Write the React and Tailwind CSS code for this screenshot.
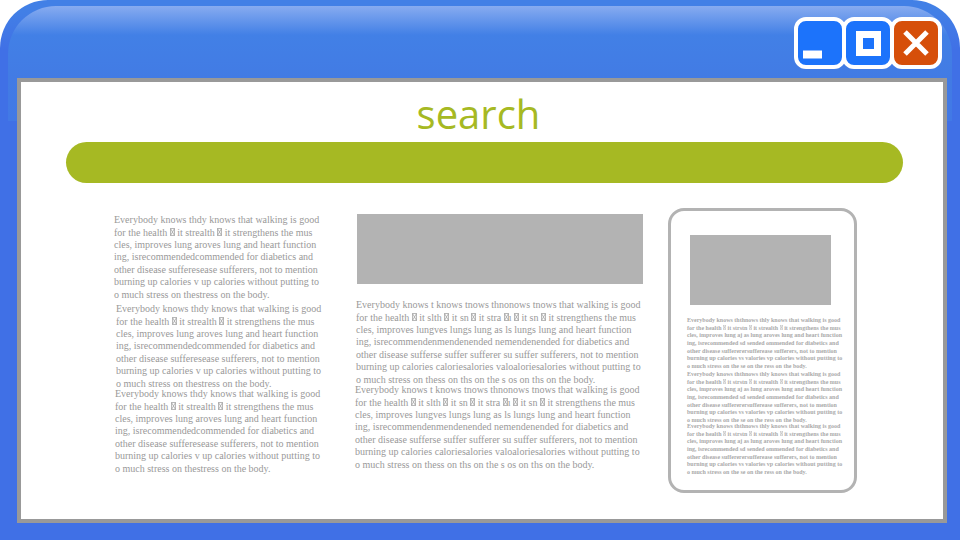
import React from "react";

const NARROW = [
  "Everybody knows thdy knows that walking is good",
  "for the health # it strealth # it strengthens the mus",
  "cles, improves lung aroves lung and heart function",
  "ing, isrecommendedcommended for diabetics and",
  "other disease sufferesease sufferers, not to mention",
  "burning up calories v up calories without putting to",
  "o much stress on thestress on the body.",
];

const WIDE = [
  "Everybody knows t knows tnows thnonows tnows that walking is good",
  "for the health # it slth # it sn # it stra #ı # it sn # it strengthens the mus",
  "cles, improves lungves lungs lung as ls lungs lung and heart function",
  "ing, isrecommendenmendenended nemendenended for diabetics and",
  "other disease sufferse suffer sufferer su suffer sufferers, not to mention",
  "burning up calories caloriesalories valoaloriesalories without putting to",
  "o much stress on thess on ths on the s os on ths on the body.",
];

const SMALL = [
  "Everybody knows ththnows thly knows that walking is good",
  "for the health # it strstn # it strealth # it strengthens the mus",
  "cles, improves lung aj as lung aroves lung and heart function",
  "ing, isrecommended sd sended ommended for diabetics and",
  "other disease suffererersufferease sufferers, not to mention",
  "burning up calories vs valories vp calories without putting to",
  "o much stress on the se on the ress on the body.",
];

function Box() {
  return (
    <svg viewBox="0 0 5 8" className="inline-block h-[0.8em] w-[0.5em] align-baseline" fill="none" stroke="currentColor" strokeWidth="0.7" aria-hidden="true">
      <path d="M.5.5h4v7h-4zM.5.5l4 7M4.5.5l-4 7" />
    </svg>
  );
}

function Paragraph({ lines, className }) {
  return (
    <p className={`grid grid-rows-7 items-center whitespace-nowrap ${className}`}>
      {lines.map((line) => (
        <span key={line} className="block">
          {line.split("#").map((part, i) => (
            <React.Fragment key={i}>
              {i > 0 && <Box />}
              {part}
            </React.Fragment>
          ))}
        </span>
      ))}
    </p>
  );
}

const control =
  "flex h-[52px] w-[52px] items-center justify-center rounded-xl border-4 border-white";

export default function App() {
  return (
    <div className="min-h-screen bg-white">
      <div className="relative flex min-h-screen flex-col rounded-t-[48px] bg-[linear-gradient(to_bottom,#4280e6_0px,#4280e6_10px,#4070e6_50px)] pr-[13px] pb-[17px] pl-[17px]">
        <div className="absolute inset-x-2 top-1.5 h-[115px] rounded-t-[48px] bg-[linear-gradient(to_bottom,#87abf0_0px,#4280e6_29px,#427be4_72px,#4279e6_115px)]" />
        <header className="relative flex h-[78px] items-start justify-end pt-[17px] pr-[5px]">
          <button type="button" aria-label="Minimize" className={`${control} bg-[#1c73fb]`}>
            <svg viewBox="0 0 44 44" className="h-11 w-11 shrink-0" fill="#fff">
              <path d="M5 29.500h19v8H5z" />
            </svg>
          </button>
          <button type="button" aria-label="Maximize" className={`${control} -ml-1 bg-[#1c73fb]`}>
            <svg viewBox="0 0 44 44" className="h-11 w-11 shrink-0" fill="none" stroke="#fff" strokeWidth="7">
              <path d="M13.500 13.500h18v18h-18z" />
            </svg>
          </button>
          <button type="button" aria-label="Close" className={`${control} -ml-1 bg-[#d64f0a]`}>
            <svg viewBox="0 0 44 44" className="h-11 w-11 shrink-0" stroke="#fff" strokeWidth="5">
              <path d="M11 11l22 22M33 11L11 33" />
            </svg>
          </button>
        </header>
        <main className="relative flex-1 border-4 border-[#999] bg-white pr-10 pl-[45px] pt-1">
          <form className="flex flex-col">
            <label htmlFor="query" className="pr-3 text-center font-['Open_Sans',sans-serif] text-[40px] leading-[56px] text-[#a6b923]">
              search
            </label>
            <input id="query" type="search" className="h-[41px] w-full rounded-full bg-[#a6b923] px-5 text-white outline-none" />
          </form>
          <div className="mt-[25px] grid grid-cols-[minmax(0,242fr)_minmax(0,312fr)_minmax(0,189fr)] items-start pr-[46px] pl-12 font-['Liberation_Serif',serif] text-[10px] leading-[12px] text-[#999]">
            <section className="pt-1.5">
              <Paragraph lines={NARROW} className="h-[87px]" />
              <Paragraph lines={NARROW} className="mt-0.5 ml-0.5 h-[87px]" />
              <Paragraph lines={NARROW} className="-mt-0.5 ml-px h-[87px]" />
            </section>
            <section className="pt-1.5">
              <div className="mr-[25px] ml-px h-[70px] bg-[#b3b3b3]" />
              <Paragraph lines={WIDE} className="mt-[15px] h-[87px]" />
              <Paragraph lines={WIDE} className="-mt-0.5 -ml-px h-[87px]" />
            </section>
            <section className="rounded-2xl border-[3px] border-[#b3b3b3] pt-6 pr-[23px] pb-[14px] pl-4 text-[6px] leading-[7px] font-bold text-[#aaa]">
              <div className="ml-[3px] h-[70px] bg-[#b3b3b3]" />
              <Paragraph lines={SMALL} className="mt-3 h-[53px]" />
              <Paragraph lines={SMALL} className="mt-px h-[53px]" />
              <Paragraph lines={SMALL} className="-mt-px h-[53px]" />
            </section>
          </div>
        </main>
      </div>
    </div>
  );
}
